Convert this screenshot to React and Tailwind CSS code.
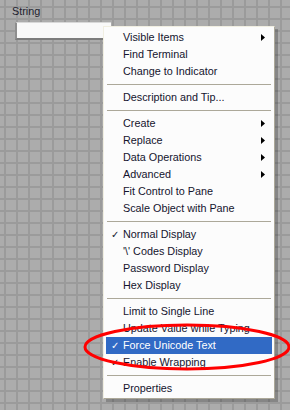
import React from "react";

const menuItems = [
    { label: "Visible Items", arrow: true },
    { label: "Find Terminal" },
    { label: "Change to Indicator" },
    { sep: true },
    { label: "Description and Tip..." },
    { sep: true },
    { label: "Create", arrow: true },
    { label: "Replace", arrow: true },
    { label: "Data Operations", arrow: true },
    { label: "Advanced", arrow: true },
    { label: "Fit Control to Pane" },
    { label: "Scale Object with Pane" },
    { sep: true },
    { label: "Normal Display", checked: true },
    { label: "'\\' Codes Display" },
    { label: "Password Display" },
    { label: "Hex Display" },
    { sep: true },
    { label: "Limit to Single Line" },
    { label: "Update Value while Typing" },
    { label: "Force Unicode Text", checked: true, active: true },
    { label: "Enable Wrapping", checked: true },
    { sep: true },
    { label: "Properties" },
];

const MenuRow = ({ item }) => {
    if (item.sep) {
        return <div className="h-[9px] pt-[4px] px-[1px]">
            <div className="h-px bg-[#aca899]"></div>
        </div>;
    }

    return <div className={`relative h-[17px] flex items-center pl-[17px] pr-[7px] ${item.active ? "bg-[#316ac5] text-white" : "text-[#14142e]"}`}>
        {item.checked && (
            <span className="absolute left-[5px] top-0 h-[17px] flex items-center text-[10px]">✓</span>
        )}
        <span className="flex-1 whitespace-nowrap">{item.label}</span>
        {item.arrow && (
            <svg width="4" height="7" viewBox="0 0 4 7">
                <path d="M0 0 L4 3.5 L0 7 Z" fill="#000" />
            </svg>
        )}
    </div>;
};

const App = () => {
    return <>
        <div
            className="relative w-[290px] h-[410px] overflow-hidden bg-[#acacac] bg-[linear-gradient(to_right,#9b9b9b_2px,transparent_2px),linear-gradient(to_bottom,#9b9b9b_2px,transparent_2px)] bg-[size:12px_12px] bg-[position:4px_6px] font-['Liberation_Sans',Arial,sans-serif] text-[10.8px]"
        >
            {/* String control - Starts Here */}
            <div className="pt-[5px] pl-[12px] text-[#1e1e2e] leading-[13px]">String</div>
            <div className="ml-[15px] mt-[4px] w-[96px] h-[18px] bg-[#f9f9f9] border-t border-l-2 border-b-2 border-t-[#d8d8d8] border-l-[#8e8e8e] border-b-[#7c7c7c]"></div>
            {/* String control - Ends Here */}

            {/* Context Menu - Starts Here */}
            <div className="absolute left-[103px] top-[26px] w-[172px] bg-[#fcfcfc] border border-t-[#f1efe2] border-l-[#f1efe2] border-r-[#aca899] border-b-[#aca899] shadow-[3px_3px_0_rgba(0,0,0,0.22)] pt-[2px] px-[2px] pb-[1px] leading-[13px]">
                {menuItems.map((item, index) => <MenuRow item={item} key={`menu-item-${index}`} />)}
            </div>
            {/* Context Menu - Ends Here */}

            {/* Red annotation ellipse */}
            <svg className="absolute left-0 top-0 pointer-events-none" width="290" height="410">
                <ellipse cx="187" cy="347" rx="102" ry="22" fill="none" stroke="#ff0000" strokeWidth="3" />
            </svg>
        </div>
    </>;
};

export default App;
